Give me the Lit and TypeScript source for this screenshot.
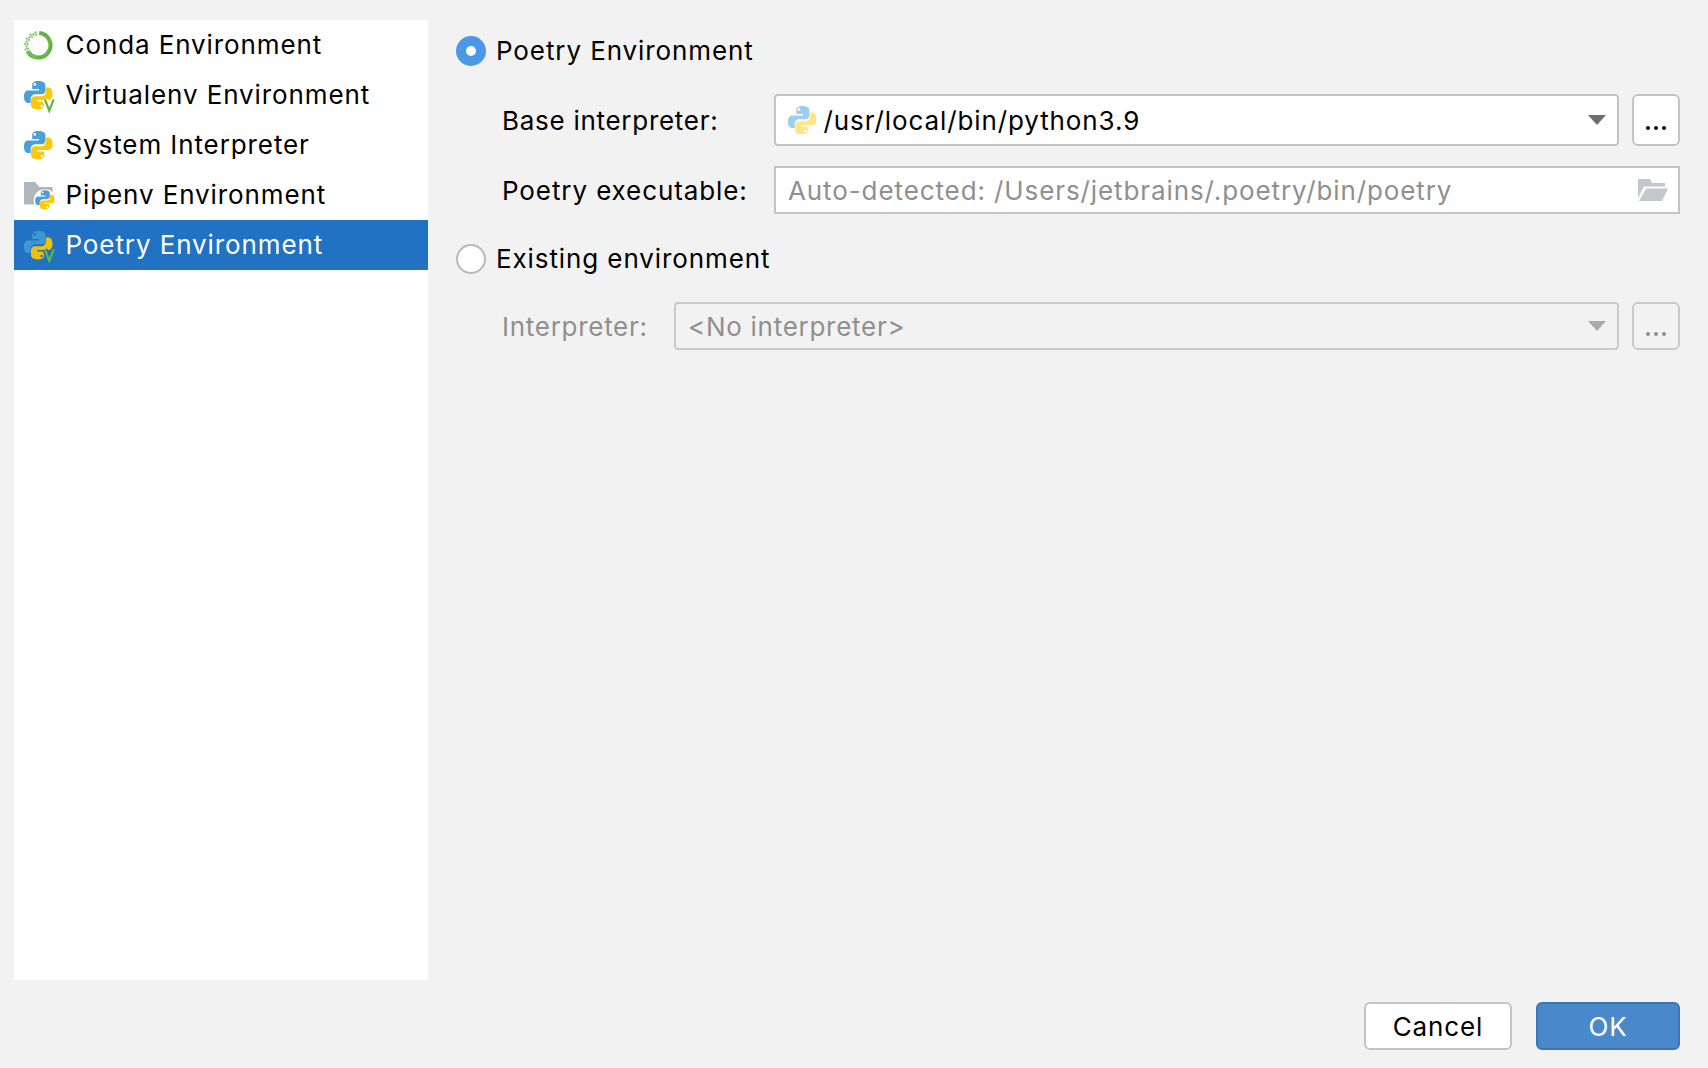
import { LitElement, html, css, svg } from "lit";
import { customElement } from "lit/decorators.js";

const python = (blue: string, yellow: string, eye = "#fff") => svg`
  <path fill=${blue} d="M8.200 1C5.200 1 5 2.400 5 3.200V5h3.400v.7H2.900C1.500 5.700 .9 7 .9 8.800c0 1.900.7 3.100 2 3.100h1.300v-1.800c0-1.500 1.100-2.500 2.500-2.500h3c1 0 1.900-.9 1.900-1.900V3.200C11.600 1.800 10.300 1 8.200 1z"/>
  <circle fill=${eye} cx="6.300" cy="2.700" r=".65"/>
  <path fill=${yellow} d="M7.800 15.200c3 0 3.200-1.400 3.200-2.200V11.200H7.600v-.7h5.500c1.400 0 2-1.300 2-3.100 0-1.900-.7-3.100-2-3.100h-1.300v1.800c0 1.500-1.100 2.500-2.500 2.500h-3c-1 0-1.900.9-1.900 1.900V13c0 1.400 1.300 2.200 3.400 2.200z"/>
  <circle fill=${eye} cx="9.700" cy="13.500" r=".65"/>`;

const vMark = (halo: string) => svg`
  <path fill="none" stroke=${halo} stroke-width="2.600" d="M11.300 10.200l2.200 5.600 2.200-5.600"/>
  <path fill="none" stroke="#62b543" stroke-width="1.100" d="M11.300 10.200l2.200 5.600 2.200-5.600"/>`;

const condaDots = [192, 204, 216, 228, 240, 252, 264, 276, 288, 300, 312, 324, 336, 348].flatMap((deg, i) => {
  const a = ((deg - 90) * Math.PI) / 180;
  const radii = i % 2 ? [10.500, 13] : [11.800];
  return radii.map((r) => svg`<rect x=${14 + r * Math.cos(a) - 0.95} y=${14 + r * Math.sin(a) - 0.95}
    width="1.900" height="1.900" fill="#7cc463" transform="rotate(45 ${14 + r * Math.cos(a)} ${14 + r * Math.sin(a)})"/>`);
});

const PY_BOX = "0.9 1 14.2 14.2";

const icons: Record<string, unknown> = {
  conda: html`<svg class="ic" viewBox="0 0 28 28">
    <path fill="none" stroke="#62b543" stroke-width="4" d="M15 2.040A12 12 0 1 1 3.600 20"/>
    ${condaDots}
  </svg>`,
  venv: html`<svg class="ic" viewBox=${PY_BOX}>${python("#4a9fd6", "#fcc80a")}${vMark("#fff")}</svg>`,
  sys: html`<svg class="ic" viewBox=${PY_BOX}>${python("#4a9fd6", "#fcc80a")}</svg>`,
  pipenv: html`<svg class="ic" viewBox="0 0 28 28">
    <path fill="#afb7be" d="M0 1h11l4 5h13v17H0z"/>
    <circle cx="20.500" cy="19" r="11" fill="#fff"/>
    <g transform="translate(9.800 7.660) scale(1.340)">${python("#4a9fd6", "#fcc80a")}</g>
  </svg>`,
  poetry: html`<svg class="ic" viewBox=${PY_BOX}>${python("#3f97cf", "#efc008", "#2172c3")}${vMark("#2172c3")}</svg>`,
};

const items = [
  { id: "conda", label: "Conda Environment" },
  { id: "venv", label: "Virtualenv Environment" },
  { id: "sys", label: "System Interpreter" },
  { id: "pipenv", label: "Pipenv Environment" },
  { id: "poetry", label: "Poetry Environment" },
];

@customElement("app-root")
export class AppRoot extends LitElement {
  static styles = css`
    :host {
      display: block;
      width: 1708px;
      height: 1068px;
      background: #f2f2f2;
      font-family: Inter, "Liberation Sans", sans-serif;
      font-size: 26px;
      letter-spacing: 0.9px;
      color: #000;
      overflow: hidden;
    }
    .root {
      display: flex;
      flex-direction: column;
      box-sizing: border-box;
      height: 100%;
      padding: 20px 28px 18px 14px;
    }
    .top { display: flex; height: 960px; }
    .side {
      width: 414px;
      flex: none;
      background: #fff;
      display: flex;
      flex-direction: column;
    }
    .item {
      height: 50px;
      display: flex;
      align-items: center;
      padding-left: 10px;
      gap: 13px;
    }
    .item span { padding-bottom: 2px; }
    .item.sel { background: #2172c3; color: #fff; }
    .ic { width: 28.500px; height: 28.500px; flex: none; display: block; overflow: visible; }
    .panel {
      flex: 1;
      margin-left: 28px;
      padding-top: 16px;
      display: flex;
      flex-direction: column;
    }
    .radio-row { display: flex; align-items: center; gap: 10px; height: 30px; }
    .radio-row span:last-child { padding-bottom: 2px; }
    .radio {
      width: 30px;
      height: 30px;
      box-sizing: border-box;
      border-radius: 50%;
      flex: none;
      background: #fff;
      border: 2px solid #b8b8b8;
    }
    .radio.on {
      background: #4a98e6;
      border: none;
      display: flex;
      align-items: center;
      justify-content: center;
    }
    .radio.on::after {
      content: "";
      width: 10px;
      height: 10px;
      border-radius: 50%;
      background: #fff;
    }
    .row { display: flex; align-items: stretch; padding-left: 46px; }
    .r1 { margin-top: 28px; height: 52px; }
    .r2 { margin-top: 20px; height: 48px; }
    .r3 { margin-top: 30px; }
    .r4 { margin-top: 28px; height: 48px; }
    .lab { flex: none; display: flex; align-items: center; }
    .w272 { width: 272px; }
    .w172 { width: 172px; }
    .dim { color: #8f8f8f; }
    .tight { letter-spacing: 0.72px; }
    .box {
      flex: 1;
      min-width: 0;
      box-sizing: border-box;
      background: #fff;
      border: 2px solid #c4c4c4;
      border-radius: 4px;
      display: flex;
      align-items: center;
      padding: 0 11px 0 12px;
    }
    .box.square { border-radius: 0; }
    .box.off { background: #f2f2f2; border-color: #cacaca; }
    .box .grow { flex: 1; }
    .py { width: 28.500px; height: 28.500px; margin-right: 7px; flex: none; }
    .arrow {
      width: 0;
      height: 0;
      border-left: 9px solid transparent;
      border-right: 9px solid transparent;
      border-top: 10px solid #6e6e6e;
    }
    .off .arrow { border-top-color: #ababab; }
    .folder { width: 30px; height: 22px; flex: none; margin-right: -1px; }
    .more {
      flex: none;
      width: 48px;
      margin-left: 13px;
      box-sizing: border-box;
      background: #fff;
      border: 2px solid #c4c4c4;
      border-radius: 6px;
      display: flex;
      align-items: flex-end;
      justify-content: center;
      gap: 4px;
      padding-bottom: 14px;
    }
    .more i { width: 4px; height: 4px; border-radius: 50%; background: #111; display: block; }
    .more.off { background: #f2f2f2; border-color: #cacaca; padding-bottom: 12px; }
    .more.off i { background: #8f8f8f; }
    .foot {
      margin-top: 22px;
      height: 48px;
      display: flex;
      justify-content: flex-end;
      gap: 24px;
    }
    .btn {
      box-sizing: border-box;
      display: flex;
      align-items: center;
      justify-content: center;
      border-radius: 6px;
      font-size: 26px;
    }
    .cancel { width: 148px; background: #fff; border: 2px solid #c4c4c4; }
    .ok { width: 144px; background: #4a88cc; border: 2px solid #3c74b4; color: #fff; }
  `;

  render() {
    return html`<div class="root">
      <div class="top">
        <div class="side">
          ${items.map(
            (i) => html`<div class="item ${i.id === "poetry" ? "sel" : ""}">
              ${icons[i.id]}<span>${i.label}</span>
            </div>`,
          )}
        </div>
        <div class="panel">
          <div class="radio-row"><span class="radio on"></span><span>Poetry Environment</span></div>
          <div class="row r1">
            <span class="lab w272 tight">Base interpreter:</span>
            <div class="box">
              <svg class="py" viewBox=${PY_BOX}>${python("#9dcfec", "#fde58a")}</svg>
              <span>/usr/local/bin/python3.9</span>
              <span class="grow"></span>
              <span class="arrow"></span>
            </div>
            <div class="more"><i></i><i></i><i></i></div>
          </div>
          <div class="row r2">
            <span class="lab w272">Poetry executable:</span>
            <div class="box square">
              <span class="dim">Auto-detected: /Users/jetbrains/.poetry/bin/poetry</span>
              <span class="grow"></span>
              <svg class="folder" viewBox="0 0 30 22">
                <path fill="#c2c8cd" d="M0 0h12l2 4h13v3.500H6L0 19z"/>
                <path fill="#c2c8cd" d="M8 9.500h22L24 22H1z"/>
              </svg>
            </div>
          </div>
          <div class="radio-row r3"><span class="radio"></span><span>Existing environment</span></div>
          <div class="row r4">
            <span class="lab w172 dim tight">Interpreter:</span>
            <div class="box off">
              <span class="dim tight">&lt;No interpreter&gt;</span>
              <span class="grow"></span>
              <span class="arrow"></span>
            </div>
            <div class="more off"><i></i><i></i><i></i></div>
          </div>
        </div>
      </div>
      <div class="foot">
        <div class="btn cancel">Cancel</div>
        <div class="btn ok">OK</div>
      </div>
    </div>`;
  }
}
